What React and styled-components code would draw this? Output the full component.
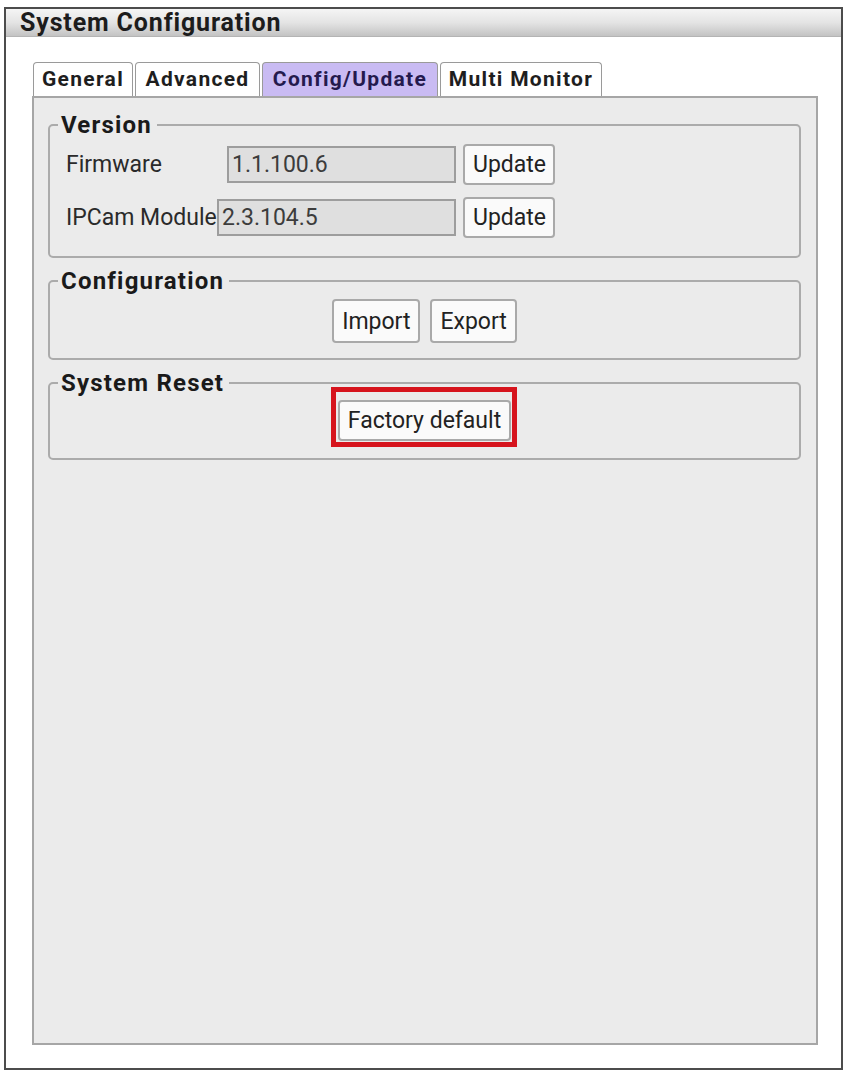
import React from "react";
import styled, { createGlobalStyle } from "styled-components";

const GlobalStyle = createGlobalStyle`
  body {
    margin: 0;
    background: #ffffff;
    font-family: Roboto, "Liberation Sans", sans-serif;
  }
`;

const tabs = [
  { name: "General", width: 100 },
  { name: "Advanced", width: 125 },
  { name: "Config/Update", width: 176 },
  { name: "Multi Monitor", width: 162 },
];

const versions = [
  { label: "Firmware", value: "1.1.100.6", labelWidth: 161, inputWidth: 229 },
  { label: "IPCam Module", value: "2.3.104.5", labelWidth: 151, inputWidth: 239 },
];

function App() {
  return (
    <>
      <GlobalStyle />
      <Window>
        <TitleBar>System Configuration</TitleBar>
        <Body>
          <TabBar>
            {tabs.map((t) => (
              <Tab key={t.name} $w={t.width} $active={t.name === "Config/Update"}>
                {t.name}
              </Tab>
            ))}
          </TabBar>
          <Panel>
            <Group>
              <Legend>Version</Legend>
              {versions.map((v, i) => (
                <Row key={v.label} $first={i === 0}>
                  <Label $w={v.labelWidth}>{v.label}</Label>
                  <ValueBox $w={v.inputWidth} readOnly value={v.value} />
                  <Button $w={92}>Update</Button>
                </Row>
              ))}
            </Group>

            <Group $top={11} $bottom={15}>
              <Legend>Configuration</Legend>
              <ButtonRow $top={6}>
                <Button $h={44}>Import</Button>
                <Button $h={44}>Export</Button>
              </ButtonRow>
            </Group>

            <Group $top={11} $bottom={17}>
              <Legend>System Reset</Legend>
              <ButtonRow $top={5}>
                <Highlight>
                  <Button>Factory default</Button>
                </Highlight>
              </ButtonRow>
            </Group>
          </Panel>
        </Body>
      </Window>
    </>
  );
}

const Window = styled.div`
  margin: 7px 0 0 4px;
  width: 839px;
  height: 1063px;
  box-sizing: border-box;
  border: 2px solid #4c4c4c;
  background: #ffffff;
  display: flex;
  flex-direction: column;
`;

const TitleBar = styled.div`
  height: 27px;
  line-height: 28px;
  padding-left: 14px;
  background: linear-gradient(#f5f5f5, #e4e4e4 50%, #c3c3c3);
  border-bottom: 1px solid #b4b4b4;
  font-size: 25px;
  font-weight: bold;
  letter-spacing: 0.85px;
  color: #1c1c1c;
  overflow: hidden;
`;

const Body = styled.div`
  flex: 1;
  display: flex;
  flex-direction: column;
  padding: 25px 23px 23px 26px;
`;

const TabBar = styled.div`
  display: flex;
  gap: 2px;
  padding-left: 1px;
`;

const Tab = styled.div`
  width: ${(p) => p.$w}px;
  height: 34px;
  box-sizing: border-box;
  display: flex;
  align-items: center;
  justify-content: center;
  padding-bottom: 2px;
  border: 1.5px solid #9a9a9a;
  border-bottom: none;
  border-radius: 4px 4px 0 0;
  background: ${(p) => (p.$active ? "#c9bbf3" : "#ffffff")};
  color: ${(p) => (p.$active ? "#241a4e" : "#1e1e1e")};
  font-size: 21px;
  font-weight: bold;
  letter-spacing: 1.3px;
`;

const Panel = styled.div`
  flex: 1;
  display: flex;
  flex-direction: column;
  background: #ebebeb;
  border: 2px solid #a6a6a6;
  padding: 15px 15px 0 14px;
`;

const Group = styled.fieldset`
  margin: ${(p) => p.$top || 0}px 0 0;
  padding: 0 16px ${(p) => (p.$bottom != null ? p.$bottom : 18)}px;
  min-width: 0;
  border: 2px solid #ababab;
  border-radius: 5px;
  background: #ebebeb;
`;

const Legend = styled.legend`
  margin-left: -8px;
  padding: 0 5px 0 3px;
  font-size: 24px;
  line-height: 24px;
  font-weight: bold;
  letter-spacing: 1.2px;
  color: #1a1a1a;
`;

const Row = styled.div`
  display: flex;
  align-items: center;
  margin-top: ${(p) => (p.$first ? 7 : 12)}px;
`;

const Label = styled.span`
  width: ${(p) => p.$w}px;
  flex: none;
  font-size: 23px;
  color: #2a2a2a;
  white-space: nowrap;
`;

const ValueBox = styled.input`
  width: ${(p) => p.$w}px;
  height: 37px;
  box-sizing: border-box;
  margin: 0 7px 0 0;
  padding: 0 3px;
  border: 2px solid #9d9d9d;
  background: #dfdfdf;
  font-family: Roboto, sans-serif;
  font-size: 23px;
  color: #3c3c3c;
  outline: none;
`;

const ButtonRow = styled.div`
  display: flex;
  justify-content: center;
  gap: 10px;
  margin-top: ${(p) => p.$top}px;
`;

const Button = styled.button`
  height: ${(p) => p.$h || 41}px;
  ${(p) => p.$w && `width: ${p.$w}px;`}
  box-sizing: border-box;
  margin: 0;
  padding: 0 8px;
  border: 2px solid #a9a9a9;
  border-radius: 4px;
  background: #fafafa;
  font-family: Roboto, sans-serif;
  font-size: 23px;
  color: #222222;
  cursor: pointer;
`;

// red callout drawn around the reset button
const Highlight = styled.div`
  position: relative;
  display: flex;

  &::after {
    content: "";
    position: absolute;
    top: -13px;
    left: -7px;
    right: -6px;
    bottom: -6px;
    border: 5px solid #d6141d;
    pointer-events: none;
  }
`;

export default App;
